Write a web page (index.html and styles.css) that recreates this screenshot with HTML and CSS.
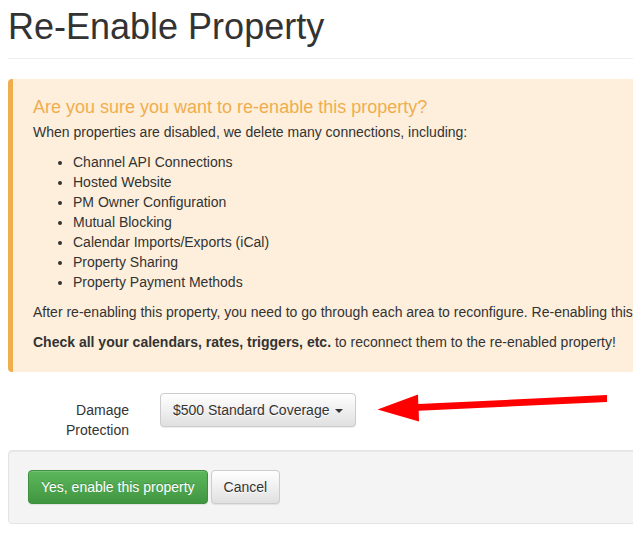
FILE: index.html
```html
<!DOCTYPE html>
<html lang="en">
<head>
<meta charset="utf-8">
<title>Re-Enable Property</title>
<link rel="stylesheet" href="styles.css">
</head>
<body>
<div class="page">
  <div class="page-header">
    <h1>Re-Enable Property</h1>
  </div>

  <div class="callout">
    <h4 class="callout-title">Are you sure you want to re-enable this property?</h4>
    <p>When properties are disabled, we delete many connections, including:</p>
    <ul class="conn-list">
      <li>Channel API Connections</li>
      <li>Hosted Website</li>
      <li>PM Owner Configuration</li>
      <li>Mutual Blocking</li>
      <li>Calendar Imports/Exports (iCal)</li>
      <li>Property Sharing</li>
      <li>Property Payment Methods</li>
    </ul>
    <p>After re-enabling this property, you need to go through each area to reconfigure. Re-enabling this property will not restore them.</p>
    <p><strong>Check all your calendars, rates, triggers, etc.</strong> to reconnect them to the re-enabled property!</p>
  </div>

  <div class="form-row">
    <label class="form-label">Damage Protection</label>
    <div class="form-control-col">
      <button class="btn btn-default" type="button">$500 Standard Coverage <span class="caret"></span></button>
    </div>
  </div>

  <div class="well">
    <button class="btn btn-success" type="button">Yes, enable this property</button>
    <button class="btn btn-default" type="button">Cancel</button>
  </div>
</div>

<svg class="annotation-arrow" width="633" height="535" viewBox="0 0 633 535" aria-hidden="true">
  <polygon points="377.5,409.5 418,394.5 418.3,404 607,395 607,402 418.7,410.7 419,421.5" fill="#ff0000"/>
</svg>
</body>
</html>
```

FILE: styles.css
```css
html, body {
  overflow: hidden;
}

body {
  margin: 0;
  position: relative;
  font-family: "Liberation Sans", Arial, Helvetica, sans-serif;
  font-size: 14px;
  line-height: 20px;
  color: #333333;
  background: #ffffff;
}

.page {
  width: 900px;
  padding: 7px 8px 0 8px;
}

.page-header {
  padding-bottom: 11px;
  border-bottom: 1px solid #eeeeee;
}

.page-header h1 {
  margin: 0;
  font-size: 36px;
  line-height: 40px;
  font-weight: normal;
  color: #333333;
}

.callout {
  margin-top: 20px;
  background: #fdefdc;
  border-left: 5px solid #f0ad4e;
  border-radius: 4px;
  padding: 18px 20px 20px 20px;
}

.callout-title {
  margin: 0 0 5px 0;
  font-size: 18px;
  line-height: 20px;
  font-weight: normal;
  color: #f0ad4e;
}

.callout p {
  margin: 0 0 10px 0;
}

.callout p:last-child {
  margin-bottom: 0;
}

.conn-list {
  margin: 0 0 10px 0;
  padding-left: 40px;
}

.form-row {
  display: flex;
  align-items: flex-start;
  margin-top: 21px;
  margin-bottom: 10px;
}

.form-label {
  display: block;
  width: 70px;
  margin-left: 51px;
  padding-right: 15px;
  padding-top: 7px;
  text-align: right;
}

.form-control-col {
  padding-left: 16px;
}

.btn {
  display: inline-block;
  box-sizing: border-box;
  height: 34px;
  padding: 6px 12px;
  font-family: "Liberation Sans", Arial, Helvetica, sans-serif;
  font-size: 14px;
  line-height: 20px;
  border: 1px solid #cccccc;
  border-radius: 4px;
  cursor: pointer;
  white-space: nowrap;
  vertical-align: middle;
  margin: 0;
}

.btn-default {
  color: #333333;
  background-color: #e6e6e6;
  background-image: linear-gradient(to bottom, #ffffff 0%, #e0e0e0 100%);
  border-color: #cccccc;
  text-shadow: 0 1px 0 #ffffff;
  box-shadow: inset 0 1px 0 rgba(255, 255, 255, 0.15), 0 1px 1px rgba(0, 0, 0, 0.075);
}

.btn-success {
  color: #ffffff;
  background-color: #449d44;
  background-image: linear-gradient(to bottom, #5cb85c 0%, #419641 100%);
  border-color: #3e8f3e;
  text-shadow: 0 -1px 0 rgba(0, 0, 0, 0.2);
  box-shadow: inset 0 1px 0 rgba(255, 255, 255, 0.15), 0 1px 1px rgba(0, 0, 0, 0.075);
}

.caret {
  display: inline-block;
  width: 0;
  height: 0;
  margin-left: 2px;
  vertical-align: middle;
  border-top: 4px solid #333333;
  border-left: 4px solid transparent;
  border-right: 4px solid transparent;
}

.well {
  display: flex;
  gap: 3px;
  padding: 19px;
  background-color: #f4f4f4;
  border: 1px solid #e3e3e3;
  border-radius: 4px;
  box-shadow: inset 0 1px 1px rgba(0, 0, 0, 0.05);
}

.annotation-arrow {
  position: absolute;
  left: 0;
  top: 0;
  pointer-events: none;
}
```
